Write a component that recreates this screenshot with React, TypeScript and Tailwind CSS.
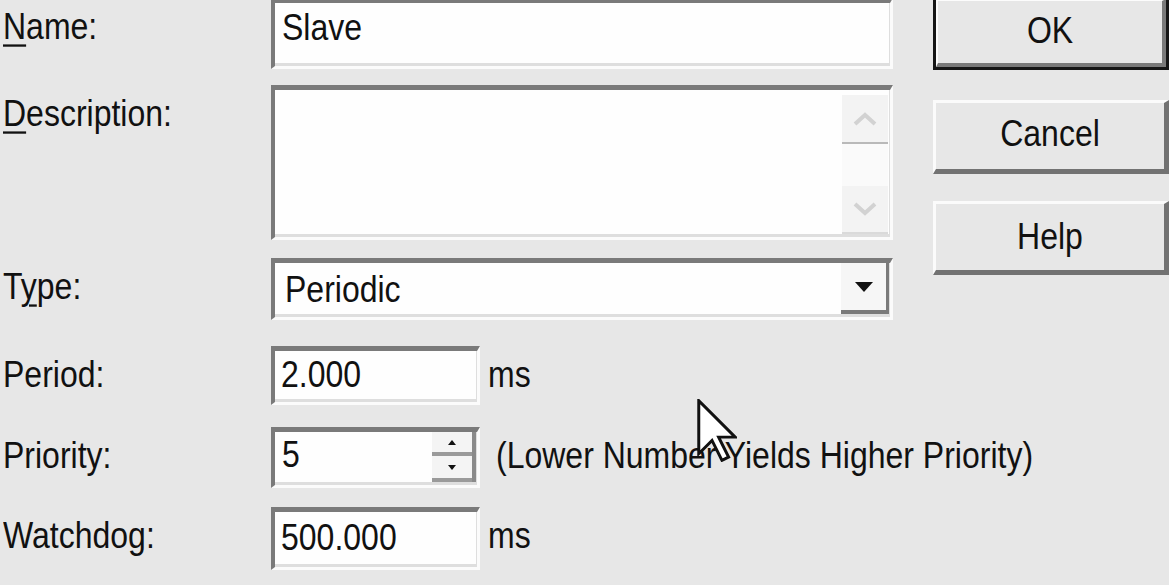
import React from "react";

const T = ({ children }: { children: React.ReactNode }) => (
  <span className="inline-block origin-center scale-y-[1.15] whitespace-pre">{children}</span>
);

const Label = ({ children }: { children: React.ReactNode }) => (
  <div className="w-[271px] shrink-0 pl-[3px] pt-[10px] text-[#111]">
    <T>{children}</T>
  </div>
);

const Sunken = ({
  className,
  children,
}: {
  className: string;
  children?: React.ReactNode;
}) => (
  <div
    className={
      "flex shrink-0 border-t-[5px] border-l-[4px] border-t-[#7a7a7a] border-l-[#7a7a7a] border-b-[3px] border-r-[3px] border-b-[#fbfbfb] border-r-[#fbfbfb] " +
      className
    }
  >
    <div className="flex flex-1 border-b-[3px] border-r-[1px] border-b-[#dedede] border-r-[#dedede] bg-[#fefefe]">
      {children}
    </div>
  </div>
);

export default function App() {
  return (
    <div className="relative flex h-[585px] w-[1169px] overflow-hidden bg-[#e7e7e7] font-['Liberation_Sans',Arial,sans-serif] text-[32px] leading-[36px] text-[#111]">
      {/* Left: fields */}
      <div className="flex w-[893px] shrink-0 flex-col">
        {/* Name */}
        <div className="mt-[-2px] flex items-start">
          <Label>
            <span className="underline decoration-2 underline-offset-[5px]">N</span>ame:
          </Label>
          <Sunken className="h-[71px] w-[622px]">
            <div className="pl-[7px] pt-[6px]">
              <T>Slave</T>
            </div>
          </Sunken>
        </div>

        {/* Description */}
        <div className="mt-[16px] flex items-start">
          <Label>
            <span className="underline decoration-2 underline-offset-[5px]">D</span>escription:
          </Label>
          <Sunken className="h-[155px] w-[622px]">
            <div className="flex-1" />
            <div className="mr-[1px] mt-[5px] flex w-[46px] flex-col bg-[#f9f9f9]">
              <div className="flex h-[49px] items-center justify-center border-b-[2px] border-b-[#b9b9b9] bg-[#f3f3f3]">
                <svg width="24" height="14" viewBox="0 0 24 14">
                  <polyline points="2,12 12,3 22,12" fill="none" stroke="#d2d2d2" strokeWidth="4" />
                </svg>
              </div>
              <div className="flex-1 bg-[#fafafa]" />
              <div className="flex h-[48px] items-center justify-center border-b-[2px] border-b-[#dadada] bg-[#f3f3f3]">
                <svg width="24" height="14" viewBox="0 0 24 14">
                  <polyline points="2,2 12,11 22,2" fill="none" stroke="#d2d2d2" strokeWidth="4" />
                </svg>
              </div>
            </div>
          </Sunken>
        </div>

        {/* Type */}
        <div className="mt-[18px] flex items-start">
          <Label>
            T<span className="underline decoration-2 underline-offset-[5px]">y</span>pe:
          </Label>
          <Sunken className="h-[62px] w-[622px]">
            <div className="flex-1 pl-[10px] pt-[8px]">
              <T>Periodic</T>
            </div>
            <div className="flex w-[48px] items-center justify-center border-b-[4px] border-r-[3px] border-b-[#7a7a7a] border-r-[#7a7a7a] bg-[#f6f6f6]">
              <svg width="20" height="12" viewBox="0 0 20 12">
                <polygon points="1,1 19,1 10,11" fill="#111" />
              </svg>
            </div>
          </Sunken>
        </div>

        {/* Period */}
        <div className="mt-[26px] flex items-start">
          <Label>Period:</Label>
          <Sunken className="h-[59px] w-[209px]">
            <div className="pl-[6px] pt-[5px]">
              <T>2.000</T>
            </div>
          </Sunken>
          <div className="ml-[8px] pt-[10px]">
            <T>ms</T>
          </div>
        </div>

        {/* Priority */}
        <div className="mt-[22px] flex items-start">
          <Label>Priority:</Label>
          <Sunken className="h-[61px] w-[209px]">
            <div className="flex-1 pl-[7px] pt-[4px]">
              <T>5</T>
            </div>
            <div className="flex w-[44px] flex-col border-r-[4px] border-r-[#8a8a8a] bg-[#f4f4f4]">
              <div className="flex h-[24px] items-center justify-center border-b-[4px] border-b-[#9a9a9a]">
                <svg width="8" height="5" viewBox="0 0 8 5">
                  <polygon points="0,5 8,5 4,0" fill="#111" />
                </svg>
              </div>
              <div className="flex flex-1 items-center justify-center border-b-[4px] border-b-[#9a9a9a]">
                <svg width="8" height="5" viewBox="0 0 8 5">
                  <polygon points="0,0 8,0 4,5" fill="#111" />
                </svg>
              </div>
            </div>
          </Sunken>
          <div className="ml-[16px] pt-[10px]">
            <T>(Lower Number Yields Higher Priority)</T>
          </div>
        </div>

        {/* Watchdog */}
        <div className="mt-[19px] flex items-start">
          <Label>Watchdog:</Label>
          <Sunken className="h-[63px] w-[209px]">
            <div className="pl-[6px] pt-[7px]">
              <T>500.000</T>
            </div>
          </Sunken>
          <div className="ml-[8px] pt-[10px]">
            <T>ms</T>
          </div>
        </div>
      </div>

      {/* Right: buttons */}
      <div className="ml-[40px] flex w-[236px] shrink-0 flex-col">
        <div className="mt-[-4px] flex h-[74px] border-[3px] border-[#161616]">
          <div className="flex flex-1 justify-center border-l-[2px] border-t-[2px] border-b-[4px] border-r-[4px] border-l-[#fcfcfc] border-t-[#fcfcfc] border-b-[#7a7a7a] border-r-[#7a7a7a] pt-[12px]">
            <T>OK</T>
          </div>
        </div>
        <div className="mt-[30px] flex h-[74px] justify-center border-l-[3px] border-t-[3px] border-b-[5px] border-r-[5px] border-l-[#fbfbfb] border-t-[#fbfbfb] border-b-[#727272] border-r-[#727272] pt-[14px]">
          <T>Cancel</T>
        </div>
        <div className="mt-[27px] flex h-[74px] justify-center border-l-[3px] border-t-[3px] border-b-[5px] border-r-[5px] border-l-[#fbfbfb] border-t-[#fbfbfb] border-b-[#727272] border-r-[#727272] pt-[15px]">
          <T>Help</T>
        </div>
      </div>

      {/* Mouse cursor overlay */}
      <svg
        className="absolute left-[697px] top-[399px]"
        width="40"
        height="63"
        viewBox="0 0 12 19"
      >
        <path
          d="M0.5 0.5 L0.5 16.5 L4.5 12.5 L7.5 18.5 L9.5 17.5 L6.5 11.5 L11.5 11.5 Z"
          fill="#ffffff"
          stroke="#111"
          strokeWidth="0.9"
          strokeLinejoin="miter"
        />
      </svg>
    </div>
  );
}
